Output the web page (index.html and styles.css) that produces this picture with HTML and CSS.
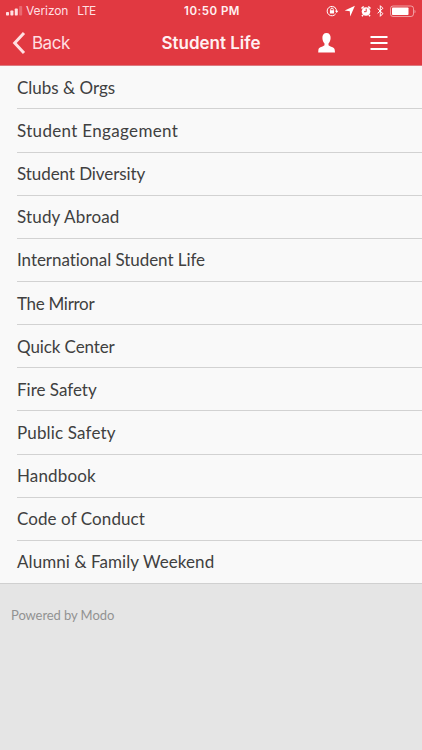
FILE: index.html
```html
<!DOCTYPE html>
<html lang="en">
<head>
<meta charset="utf-8">
<title>Student Life</title>
<meta name="viewport" content="width=device-width, initial-scale=1">
<link rel="stylesheet" href="styles.css">
</head>
<body>
<header class="header">
  <div class="status">
    <div class="carrier">
      <svg class="signal" viewBox="0 0 17 10"><rect x="0" y="6" width="3" height="3.5" rx=".7"/><rect x="4.4" y="4.5" width="3" height="5" rx=".7"/><rect x="8.8" y="2.5" width="3" height="7" rx=".7"/><rect x="13.2" y="0" width="3" height="9.5" rx=".7" opacity=".3"/></svg>
      <span class="network">Verizon</span><span class="lte">LTE</span>
    </div>
    <span class="time">10:50 PM</span>
    <svg class="indicators" viewBox="0 0 92 16">
      <g fill="none" stroke="currentColor" stroke-width="1">
        <path d="M9.700 5.400A4.700 4.700 0 1 0 9.700 10.800M10.500 8.500A4.700 4.700 0 0 0 8.800 4.400"/>
        <path d="M4.700 7.600V6.400a1.300 1.300 0 0 1 2.600 0v1.200"/>
      </g>
      <path d="M3.900 7.300h4.200v3.200H3.900zM8.900 7.800h3.500l-1.700 2.100z"/>
      <path d="M28.900 2.800L18.700 7.600l5.100.7.400 5.100z"/>
      <circle cx="40" cy="8.500" r="4.300"/>
      <path class="bells" d="M35.500 5.500l2.200-2M44.500 5.500l-2.200-2M37 12l-1 1.200M43 12l1 1.200"/>
      <path class="hands" d="M40.200 5.700v3H38"/>
      <path class="bluetooth" d="M51.600 5.600l5.300 5-2.600 2.700V2.700l2.600 2.600-5.300 5"/>
      <rect class="case" x="64.500" y="3" width="23" height="10.500" rx="2.500"/>
      <rect x="66" y="4.500" width="16.500" height="7.500" rx=".8"/>
      <path d="M88.500 6.700c1.400.5 1.400 3.100 0 3.600z" opacity=".5"/>
    </svg>
  </div>
  <nav class="navbar">
    <a class="back"><svg viewBox="0 0 14 24"><path d="M12 2L2.700 12l9.300 10"/></svg><span>Back</span></a>
    <h1>Student Life</h1>
    <div class="actions">
      <svg class="person" viewBox="0 0 17 20"><path d="M8.500 0C11.300 0 12.800 2 12.600 5c-.1 2.700-1 4.300-2.100 5.600v1.600c1.600 1.600 5.800 1.700 6.200 4.500l.3 2.800H.2l.2-2.800c.4-2.800 4.500-2.900 6.100-4.500v-1.600C5.400 9.300 4.500 7.700 4.400 5 4.200 2 5.700 0 8.500 0z"/></svg>
      <svg class="menu" viewBox="0 0 18 16"><path d="M.5 2h17M.5 8h17M.5 14h17"/></svg>
    </div>
  </nav>
</header>
<main>
  <ul class="list">
    <li><span class="clubs">Clubs &amp; Orgs</span></li>
    <li><span class="engagement">Student Engagement</span></li>
    <li><span class="diversity">Student Diversity</span></li>
    <li><span class="abroad">Study Abroad</span></li>
    <li><span class="international">International Student Life</span></li>
    <li><span class="mirror">The Mirror</span></li>
    <li><span class="quick">Quick Center</span></li>
    <li><span class="fire">Fire Safety</span></li>
    <li><span class="public">Public Safety</span></li>
    <li><span class="handbook">Handbook</span></li>
    <li><span class="conduct">Code of Conduct</span></li>
    <li><span class="alumni">Alumni &amp; Family Weekend</span></li>
  </ul>
</main>
<footer>Powered by Modo</footer>
</body>
</html>
```
FILE: styles.css
```css
* { box-sizing: border-box; }
body { margin: 0; min-height: 750px; background: #e5e5e5; color: #404040; font-family: Lato, sans-serif; font-variant-ligatures: none; }
svg { display: block; fill: currentColor; }
.header { height: 66.2px; background: #e13941; color: #fff; font-family: Inter, sans-serif; border-bottom: 1px solid #dc7a80; }
.status { height: 21px; display: grid; grid-template-columns: 1fr auto 1fr; align-items: center; padding: 0 4px 0 6px; font-size: 12px; }
.carrier { display: flex; align-items: center; color: #ffdfe1; }
.signal { width: 17px; height: 10px; margin-right: 3px; }
.network { letter-spacing: -.1px; }
.lte { margin-left: 9px; letter-spacing: -.9px; }
.time { font-weight: 600; font-size: 11.5px; letter-spacing: .5px; color: #fff0f1; }
.indicators { width: 92px; height: 16px; justify-self: end; }
.bells, .hands, .bluetooth, .case { fill: none; stroke: currentColor; stroke-width: 1; }
.bells { stroke-width: 1.6; }
.hands { stroke: #e13941; }
.case { opacity: .5; }
.navbar { height: 44px; display: grid; grid-template-columns: 1fr auto 1fr; align-items: center; padding: 0 12px; }
.back { display: flex; align-items: center; gap: 6px; color: #ffdfe1; font-size: 17px; letter-spacing: -.5px; }
.back svg { width: 14px; height: 24px; fill: none; stroke: currentColor; stroke-width: 3; }
h1 { margin: 0; font-size: 17px; line-height: 22px; font-weight: 600; letter-spacing: 0; color: #fff0f1; }
.actions { display: flex; align-items: center; justify-content: flex-end; gap: 35px; margin-right: 22px; }
.person { width: 17px; height: 20px; }
.menu { width: 18px; height: 16px; stroke: currentColor; stroke-width: 2; }
.list { list-style: none; margin: 0; padding: 0 0 0 17px; background: #f9f9f9; border-bottom: 1px solid #d0d0d0; }
.list li { height: 43.17px; border-bottom: 1px solid #d2d2d2; display: flex; align-items: center; padding-top: 1px; font-size: 17px; line-height: 22px; white-space: nowrap; }
.list li:last-child { border-bottom: 0; height: 42px; }
.engagement { letter-spacing: .33px; }
.diversity { letter-spacing: -.07px; }
.abroad { letter-spacing: .17px; }
.international { letter-spacing: -.05px; }
.mirror { letter-spacing: -.3px; }
.quick { letter-spacing: -.1px; }
.public { letter-spacing: .16px; }
.handbook { letter-spacing: .15px; }
.conduct { letter-spacing: .09px; }
.alumni { letter-spacing: .08px; }
footer { padding: 23px 11px; font-size: 13px; line-height: 16px; letter-spacing: -.08px; color: #929292; }
```
